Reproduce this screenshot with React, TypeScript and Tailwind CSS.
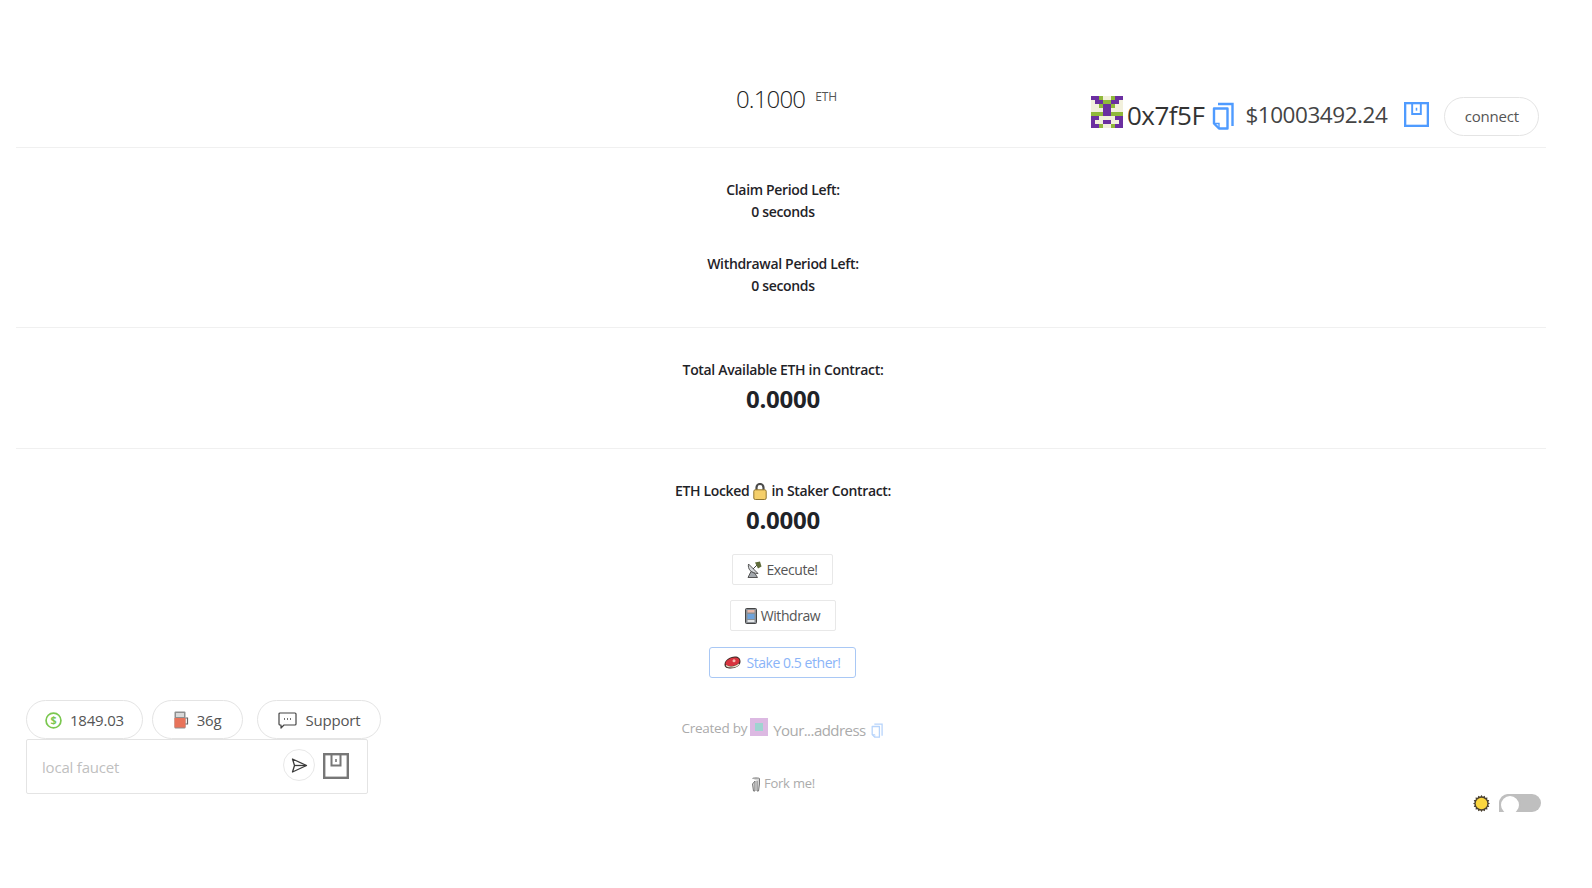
import React from 'react';

const P = '#6b2fa0';
const G = '#8fb83a';
const C = '#f2f0dc';

// left half of the blockie, the right half is mirrored
const blockie = [
  [P, P, G, C],
  [C, P, P, G],
  [C, C, G, P],
  [C, C, C, P],
  [G, G, G, P],
  [P, P, C, C],
  [P, C, C, P],
  [P, P, G, C],
];

const Blockie: React.FC<{ size: number; className?: string }> = ({ size, className }) => (
  <svg width={size} height={size} viewBox="0 0 8 8" shapeRendering="crispEdges" className={className}>
    {blockie.map((row, y) =>
      [...row, ...[...row].reverse()].map((c, x) => <rect key={`${x}-${y}`} x={x} y={y} width="1" height="1" fill={c} />),
    )}
  </svg>
);

const CopyIcon: React.FC<{ className?: string }> = ({ className }) => (
  <svg viewBox="0 0 22 28" fill="none" stroke="currentColor" strokeWidth="2.4" className={className}>
    <path d="M6 2h14.500v22" />
    <path d="M2 6.500h13.500v20H7L2 21.500z" strokeLinejoin="round" />
    <path d="M2.500 21.500H7v4.500" strokeWidth="1.400" />
  </svg>
);

const BoxIcon: React.FC<{ className?: string }> = ({ className }) => (
  <svg viewBox="0 0 26 26" fill="none" stroke="currentColor" className={className}>
    <rect x="1.200" y="1.200" width="23.600" height="23.600" strokeWidth="2.400" />
    <path d="M8.500 1.500v11h9v-11" strokeWidth="2" />
    <path d="M13 6v3" strokeWidth="1.600" />
  </svg>
);

const DishEmoji = () => (
  <svg width="16" height="18" viewBox="0 0 16 18">
    <path d="M2.500 3c-1 5 2.500 9.500 9.500 9.500L2.500 3z" fill="#d4d7da" stroke="#555" strokeWidth="1" />
    <path d="M5 10.500L2 16.500h9.500L9 12.500z" fill="#a3a8ad" stroke="#555" strokeWidth="1" />
    <path d="M7 8l4-4" stroke="#444" strokeWidth="1" />
    <path d="M9 1.500l5-1 1.500 5-3.500 2z" fill="#5f6b3a" />
  </svg>
);

const PagerEmoji = () => (
  <svg width="12" height="16" viewBox="0 0 12 16">
    <rect x="0.500" y="0.500" width="11" height="15" rx="1" fill="#8b9096" stroke="#444" />
    <rect x="2.500" y="2" width="7" height="2.500" fill="#e9b7a8" />
    <rect x="2.500" y="6" width="7" height="5" fill="#6ea3dc" />
    <rect x="2.500" y="12" width="7" height="2" fill="#e4e6e8" />
  </svg>
);

const MeatEmoji = () => (
  <svg width="17" height="13" viewBox="0 0 17 13">
    <path d="M0.500 8.500c0-4 5-8 10.500-8 3.500 0 5.500 2 5.500 5 0 4-4.500 7-10 7-3.500 0-6-1-6-4z" fill="#3d2a26" />
    <path d="M1.500 7.500c0-3 5-6 9.500-6 3 0 4.500 1.500 4.500 3.500 0 2.500-4 5-8.500 5-3.500 0-5.500-.500-5.500-2.500z" fill="#d8343f" />
    <path d="M2 9.500c1 1 3 1.500 5 1.500 3 0 6-1 8-3" fill="none" stroke="#eadfc8" strokeWidth="1.200" />
    <circle cx="10" cy="4.800" r="1.500" fill="#f4b9b0" />
  </svg>
);

const LockEmoji = () => (
  <svg width="14" height="17" viewBox="0 0 14 17">
    <path d="M3.500 8V4.500a3.500 3.500 0 017 0V8" fill="none" stroke="#4a4a4a" strokeWidth="2.200" />
    <rect x="0.800" y="6.800" width="12.400" height="9.700" rx="1.500" fill="#f5cf6a" stroke="#8f7430" />
  </svg>
);

const PumpEmoji = () => (
  <svg width="15" height="18" viewBox="0 0 15 18">
    <rect x="0.500" y="0.500" width="11" height="17" rx="1" fill="#8f8f8f" />
    <rect x="2" y="2" width="8" height="4" fill="#d9d9d9" />
    <rect x="0.500" y="7" width="11" height="9.500" fill="#e8735a" />
    <path d="M11.500 7h2v6h-2" fill="none" stroke="#666" strokeWidth="1.200" />
  </svg>
);

const ForkEmoji = () => (
  <svg width="10" height="15" viewBox="0 0 10 15" fill="none" stroke="#777" strokeWidth="1">
    <path d="M1.500 1.500C1.500 .8 8.500 .8 8.500 1.500V7L7.500 14H6V4M4 4v10H2.500L1.500 7z" fill="#d6d6d6" />
  </svg>
);

// 16 rays round the sun
const sunRays = Array.from({ length: 32 }, (_, i) => {
  const r = i % 2 === 0 ? 8.4 : 6.8;
  const a = (i * Math.PI) / 16;
  return `${(8.5 + r * Math.cos(a)).toFixed(2)},${(8.5 + r * Math.sin(a)).toFixed(2)}`;
}).join(' ');

const SunEmoji = () => (
  <svg width="17" height="17" viewBox="0 0 17 17">
    <polygon points={sunRays} fill="#4a4030" />
    <circle cx="8.500" cy="8.500" r="5.800" fill="#fbd63e" />
  </svg>
);

const SendIcon = () => (
  <svg width="17" height="15" viewBox="0 0 17 15" fill="none" stroke="#3b3b3b" strokeWidth="1.300" strokeLinejoin="round">
    <path d="M1.500 1l14 6.500-14 6.500 2-6.500z" />
    <path d="M3.500 7.500h12" />
  </svg>
);

const Divider = () => <div className="ml-4 mr-5 h-px bg-[#f0f0f0]" />;

const Label: React.FC<{ children: React.ReactNode }> = ({ children }) => (
  <div className="flex h-[22px] items-center justify-center gap-1 text-[14px] font-semibold leading-[22px] tracking-[-0.33px] text-[#1f2328]">
    {children}
  </div>
);

const Amount = () => (
  <div className="h-[36px] text-[24px] font-bold leading-[36px] tracking-[-0.25px] text-[#1f2328]">0.0000</div>
);

const Pill: React.FC<{ className?: string; children: React.ReactNode }> = ({ className, children }) => (
  <div
    className={`flex h-[39px] items-center justify-center rounded-full border border-[#e4e4e4] bg-white pt-[1px] text-[15px] tracking-[-0.2px] text-[#555555] ${className ?? ''}`}
  >
    {children}
  </div>
);

const ActionButton: React.FC<{ className: string; children: React.ReactNode }> = ({ className, children }) => (
  <button
    className={`flex h-[31px] items-center justify-center rounded-[2px] border text-[14px] tracking-[-0.45px] ${className}`}
  >
    {children}
  </button>
);

export default function App() {
  return (
    <div className="relative h-[888px] overflow-hidden bg-white font-['Open_Sans',sans-serif]">
      <main className="w-[1566px] text-center">
        <div className="flex h-[147px] items-start justify-center pl-[7px] pt-[83px] text-[#222222]">
          <span className="text-[24px] font-light leading-[32px] tracking-[-0.85px]">0.1000</span>
          <span className="ml-[10px] mt-[1px] text-[12px] leading-[26px] tracking-[-0.1px] text-[#555555]">ETH</span>
        </div>
        <Divider />

        <section className="pb-[30px] pt-[31px]">
          <Label>Claim Period Left:</Label>
          <Label>0 seconds</Label>
          <div className="h-[30px]" />
          <Label>Withdrawal Period Left:</Label>
          <Label>0 seconds</Label>
        </section>
        <Divider />

        <section className="pb-[31px] pt-[31px]">
          <Label>Total Available ETH in Contract:</Label>
          <Amount />
        </section>
        <Divider />

        <section className="flex flex-col items-center pt-[31px]">
          <Label>
            ETH Locked <LockEmoji /> in Staker Contract:
          </Label>
          <Amount />
          <ActionButton className="mr-[2px] mt-[16px] w-[101px] gap-[4px] border-[#e8e8e8] text-[#555555]">
            <DishEmoji /> Execute!
          </ActionButton>
          <ActionButton className="mr-[1px] mt-[15px] w-[106px] gap-[4px] border-[#e8e8e8] text-[#555555]">
            <PagerEmoji /> Withdraw
          </ActionButton>
          <ActionButton className="mr-[1px] mt-[16px] w-[147px] gap-[5px] rounded-[3px] border-[#a9c8f5] text-[#8ab4f8]">
            <MeatEmoji /> Stake 0.5 ether!
          </ActionButton>

          <div className="mr-[2px] mt-[39px] flex h-[24px] items-center gap-[3px] text-[13.5px] tracking-[-0.25px] text-[#ababab]">
            <span className="-mt-[2px]">Created by</span>
            <span className="-mt-[4px] h-[18px] w-[18px] bg-[#dcb9e2] p-[5px]">
              <span className="block h-full w-full bg-[#9fd4d0]" />
            </span>
            <span className="ml-[2px] mt-[2px] text-[15px] tracking-[-0.55px]">Your...address</span>
            <CopyIcon className="ml-[2px] mt-[2px] h-[15px] w-[12px] text-[#b7d4fb]" />
          </div>

          <div className="mt-[32px] flex h-[22px] items-center gap-[3px] text-[13px] tracking-[-0.2px] text-[#ababab]">
            <ForkEmoji /> Fork me!
          </div>
        </section>
      </main>

      {/* account bar, fixed to the top right */}
      <div className="absolute left-[1091px] top-[96px] flex items-start">
        <Blockie size={32} />
        <span className="ml-[4px] mt-[-1px] text-[26px] leading-[40px] tracking-[-0.5px] text-[#333333]">0x7f5F</span>
        <CopyIcon className="ml-[8px] mt-[6px] h-[28px] w-[22px] text-[#4f9bff]" />
        <span className="ml-[11px] mt-[-1px] text-[22.5px] leading-[40px] tracking-[-0.45px] text-[#444444]">$10003492.24</span>
        <BoxIcon className="ml-[17px] mt-[6px] h-[25px] w-[25px] text-[#4f9bff]" />
        <button className="ml-[15px] mt-[1px] h-[39px] w-[95px] rounded-full border border-[#e4e4e4] bg-white text-[15px] tracking-[-0.2px] text-[#555555]">
          connect
        </button>
      </div>

      {/* price, gas and faucet, fixed to the bottom left */}
      <div className="absolute left-[26px] top-[700px] w-[355px]">
        <div className="flex gap-[9px]">
          <Pill className="w-[117px] gap-2">
            <svg width="17" height="17" viewBox="0 0 16 16" className="text-[#7ac74f]">
              <circle cx="8" cy="8" r="7" fill="none" stroke="currentColor" strokeWidth="1.600" />
              <text x="8" y="11.500" textAnchor="middle" fontSize="10" fontWeight="700" fill="currentColor" fontFamily="Open Sans, sans-serif">$</text>
            </svg>
            1849.03
          </Pill>
          <Pill className="w-[91px] gap-2">
            <PumpEmoji /> 36g
          </Pill>
          <Pill className="ml-[5px] w-[124px] gap-[9px]">
            <svg width="19" height="17" viewBox="0 0 19 17" fill="none" stroke="#444" strokeWidth="1.200">
              <path d="M2 1h15a1 1 0 011 1v10a1 1 0 01-1 1H6l-3 3v-3H2a1 1 0 01-1-1V2a1 1 0 011-1z" strokeLinejoin="round" />
              <path d="M6 7h1M9 7h1M12 7h1" strokeWidth="1.500" />
            </svg>
            Support
          </Pill>
        </div>
        <div className="flex h-[55px] w-[342px] items-center rounded-[2px] border border-[#e4e4e4] bg-white pl-[15px] pr-[18px]">
          <span className="mt-[1px] flex-1 text-[15px] tracking-[-0.2px] text-[#bfbfbf]">local faucet</span>
          <div className="mb-[3px] mr-[8px] flex h-8 w-8 items-center justify-center rounded-full border border-[#e8e8e8]">
            <SendIcon />
          </div>
          <BoxIcon className="mb-[1px] h-[26px] w-[26px] text-[#777777]" />
        </div>
      </div>

      {/* theme switch */}
      <div className="absolute left-[1473px] top-[794px] flex items-center gap-[9px]">
        <SunEmoji />
        <div className="flex h-[18px] w-[42px] overflow-hidden rounded-t-full rounded-r-full bg-[#bfbfbf]">
          <span className="h-[22px] w-[22px] rounded-full border-2 border-[#bfbfbf] bg-white" />
        </div>
      </div>
    </div>
  );
}
